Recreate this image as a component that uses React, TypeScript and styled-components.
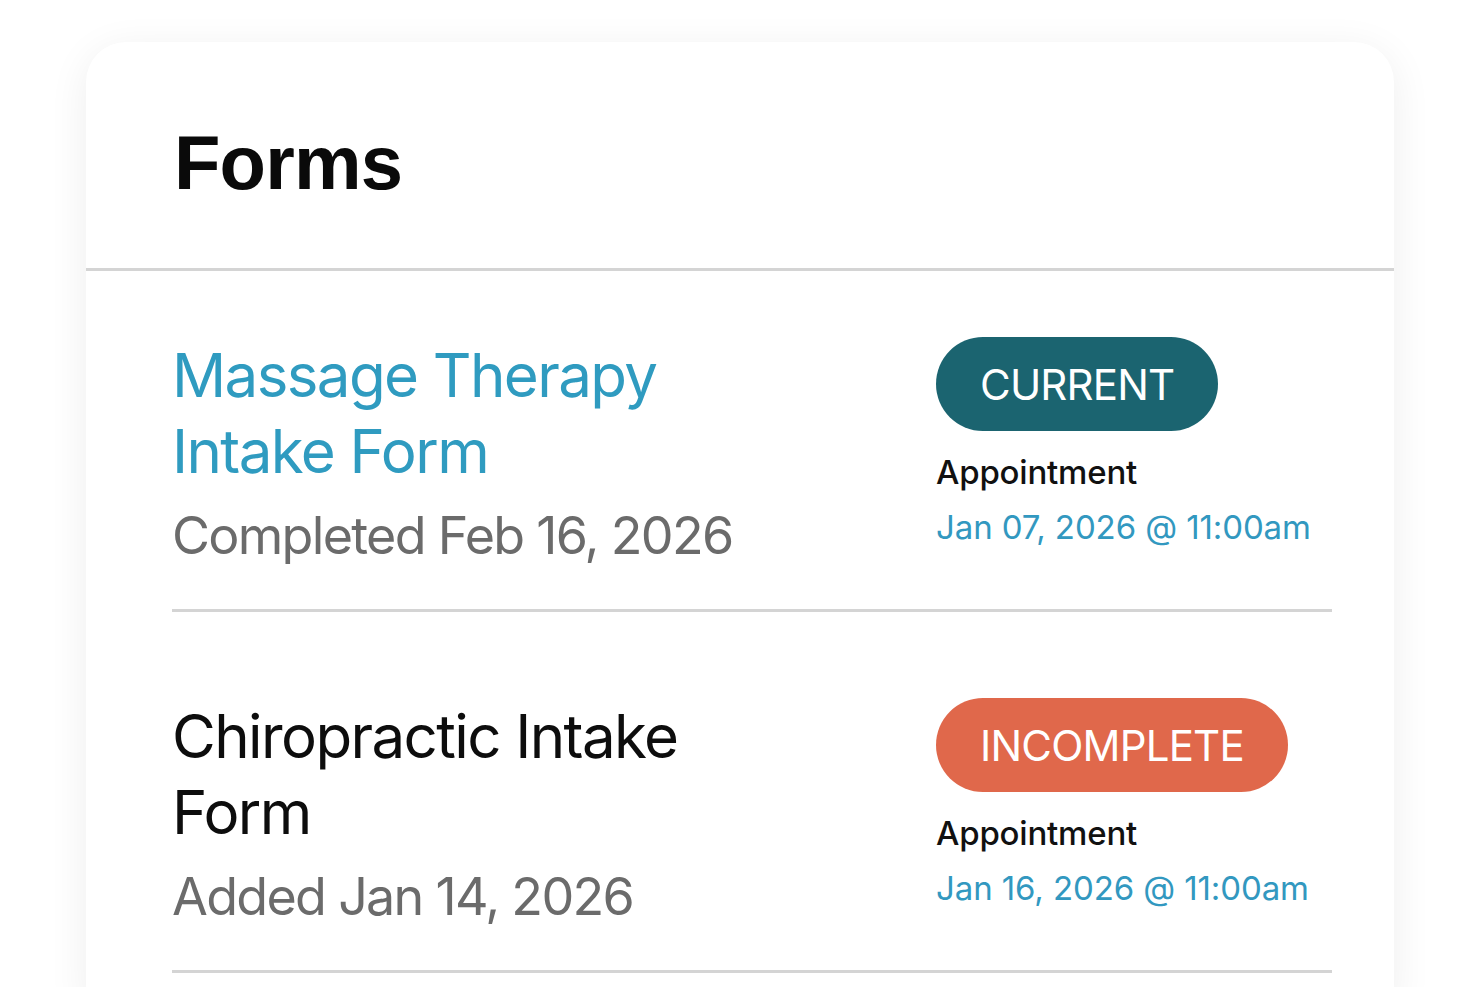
import React from 'react';
import styled, { createGlobalStyle } from 'styled-components';

const GlobalStyle = createGlobalStyle`
  html, body {
    margin: 0;
    padding: 0;
    background: #ffffff;
  }
  body {
    font-family: Inter, "Noto Sans", sans-serif;
    -webkit-font-smoothing: antialiased;
  }
`;

const Page = styled.div`
  padding: 42px 86px 0;
  min-height: 987px;
  box-sizing: border-box;
  overflow: hidden;
`;

const Card = styled.div`
  background: #ffffff;
  border-radius: 40px 40px 0 0;
  box-shadow: 0 8px 40px rgba(0, 0, 0, 0.07);
  min-height: 960px;
`;

const CardHeader = styled.div`
  padding: 77px 88px 61px;
  border-bottom: 3px solid #d4d4d4;
`;

const Heading = styled.h1`
  margin: 0;
  font-family: "Liberation Sans", Arial, sans-serif;
  font-weight: 700;
  font-size: 76px;
  line-height: 88px;
  letter-spacing: -0.8px;
  color: #0a0a0a;
`;

const List = styled.div`
  padding: 0 62px 0 86px;
`;

const Row = styled.div`
  display: flex;
  align-items: flex-start;
  padding: 86px 0 41px;
  border-bottom: 3px solid #d4d4d4;

  &:first-child {
    padding-top: 66px;
  }
`;

const Info = styled.div`
  width: 620px;
  margin-right: 144px;
`;

const Title = styled.div<{ $link?: boolean }>`
  font-size: 60px;
  line-height: 76px;
  font-weight: 400;
  letter-spacing: -1.6px;
  color: ${(p) => (p.$link ? '#2f9bc0' : '#0d0d0d')};
`;

const Meta = styled.div`
  margin-top: 15px;
  font-size: 52px;
  line-height: 64px;
  color: #6b6b6b;
  letter-spacing: -1.7px;
`;

const Side = styled.div`
  display: flex;
  flex-direction: column;
  align-items: flex-start;
`;

const Badge = styled.span<{ $tone: 'current' | 'incomplete' }>`
  display: inline-flex;
  align-items: center;
  height: 94px;
  padding: 0 44px;
  border-radius: 47px;
  background: ${(p) => (p.$tone === 'current' ? '#1b6470' : '#e0684b')};
  color: #ffffff;
  font-size: 42px;
  font-weight: 400;
  letter-spacing: -0.8px;
`;

const ApptLabel = styled.div`
  margin-top: 16px;
  font-size: 33px;
  line-height: 50px;
  font-weight: 500;
  color: #111111;
  letter-spacing: -0.2px;
`;

const ApptDate = styled.div`
  margin-top: 5px;
  font-size: 33px;
  line-height: 50px;
  color: #3298c0;
  letter-spacing: -0.1px;
`;

type Form = {
  title: string;
  meta: string;
  status: 'current' | 'incomplete';
  date: string;
};

const forms: Form[] = [
  {
    title: 'Massage Therapy Intake Form',
    meta: 'Completed Feb 16, 2026',
    status: 'current',
    date: 'Jan 07, 2026 @ 11:00am',
  },
  {
    title: 'Chiropractic Intake Form',
    meta: 'Added Jan 14, 2026',
    status: 'incomplete',
    date: 'Jan 16, 2026 @ 11:00am',
  },
];

export default function App() {
  return (
    <>
      <GlobalStyle />
      <Page>
        <Card>
          <CardHeader>
            <Heading>Forms</Heading>
          </CardHeader>
          <List>
            {forms.map((f) => (
              <Row key={f.title}>
                <Info>
                  <Title $link={f.status === 'current'}>{f.title}</Title>
                  <Meta>{f.meta}</Meta>
                </Info>
                <Side>
                  <Badge $tone={f.status}>{f.status.toUpperCase()}</Badge>
                  <ApptLabel>Appointment</ApptLabel>
                  <ApptDate>{f.date}</ApptDate>
                </Side>
              </Row>
            ))}
          </List>
        </Card>
      </Page>
    </>
  );
}
